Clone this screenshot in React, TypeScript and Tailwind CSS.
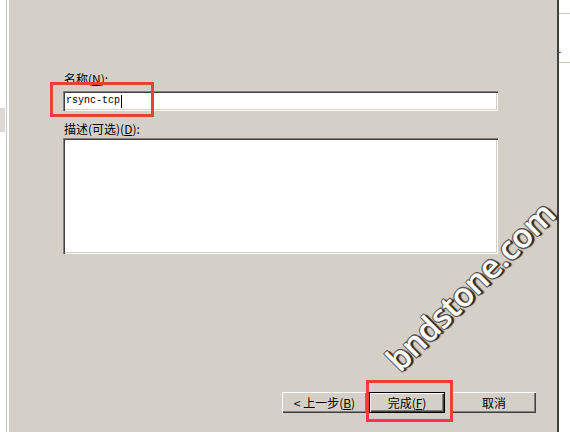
import React from "react";

const cjk = "font-['SimSun','Noto_Sans_CJK_SC',sans-serif]";
const raised =
  "shadow-[inset_1px_1px_0_#ffffff,inset_-1px_-1px_0_#404040,inset_-2px_-2px_0_#808080]";
const sunken =
  "shadow-[inset_1px_1px_0_#808080,inset_2px_2px_0_#404040,inset_-1px_-1px_0_#ffffff,inset_-2px_-2px_0_#d4d0c8]";

const App = () => {
  return (
    <div className="relative w-[570px] h-[432px] overflow-hidden flex bg-white text-black">
      {/* left edge of the window behind */}
      <div className="w-[9px] shrink-0 h-full flex">
        <div className="w-[6px] h-full flex flex-col">
          <div className="h-[108px]" />
          <div className="w-[5px] h-[24px] bg-[#dcd9d3]" />
        </div>
        <div className="w-px h-full bg-[#c8c5be]" />
        <div className="w-[2px] h-full bg-white" />
      </div>

      {/* dialog body */}
      <div className={`w-[548px] shrink-0 h-full bg-[#d4d0c8] flex flex-col ${cjk} text-[12px] leading-[14px]`}>
        <div className="flex flex-col pl-[54px] pr-[59px] pt-[72px]">
          <label className="h-[14px] pl-px">
            名称(<span className="underline">N</span>):
          </label>
          <div className={`mt-[5px] h-[20px] bg-white flex items-center pl-[3px] ${sunken}`}>
            <span className="font-['Liberation_Mono',monospace] text-[10px] leading-[12px]">rsync-tcp</span>
            <span className="w-px h-[13px] bg-black ml-px" />
          </div>
          <label className="mt-[11px] h-[14px] pl-px">
            描述(可选)(<span className="underline">D</span>):
          </label>
          <div className={`mt-[2px] h-[116px] bg-white ${sunken}`} />
        </div>

        <div className="flex-1" />

        {/* buttons */}
        <div className="flex items-center justify-end pr-[21px] mb-[19px] h-[21px]">
          <button className={`w-[85px] h-[21px] flex items-center justify-center bg-[#d4d0c8] ${raised}`}>
            &lt; 上一步(<span className="underline">B</span>)
          </button>
          <button className={`ml-[2px] w-[76px] h-[21px] flex items-center justify-center bg-[#d4d0c8] border border-black ${raised}`}>
            完成(<span className="underline">F</span>)
          </button>
          <button className={`ml-[7px] w-[84px] h-[21px] flex items-center justify-center bg-[#d4d0c8] ${raised}`}>
            取消
          </button>
        </div>
      </div>

      {/* right edge: dialog frame and window behind */}
      <div className="w-[2px] shrink-0 h-full bg-[#404040]" />
      <div className="flex-1 h-full flex flex-col bg-white">
        <div className="h-[13px]" />
        <div className="h-px bg-[#c8c5be]" />
        <div className="h-[38px]" />
        <div className="h-px w-[2px] bg-[#3a9a3a]" />
        <div className="h-[9px]" />
        <div className="h-px bg-[#c8c5be]" />
      </div>

      {/* annotation boxes */}
      <div className="absolute left-[50px] top-[82px] w-[104px] h-[35px] border-[3px] border-[#f03c3c]" />
      <div className="absolute left-[366px] top-[380px] w-[87px] h-[42px] border-[3px] border-[#f03c3c]" />

      {/* watermark */}
      <div className="absolute left-[470px] top-[286px] -translate-x-1/2 -translate-y-1/2 -rotate-45 font-['Open_Sans',sans-serif] font-semibold text-[33px] leading-none text-white whitespace-nowrap tracking-[-0.5px] [text-shadow:1px_1px_0_#333,-1px_-1px_0_#666,1px_-1px_0_#555,-1px_1px_0_#555,2px_2px_1px_#222]">
        bndstone.com
      </div>
    </div>
  );
};

export default App;
